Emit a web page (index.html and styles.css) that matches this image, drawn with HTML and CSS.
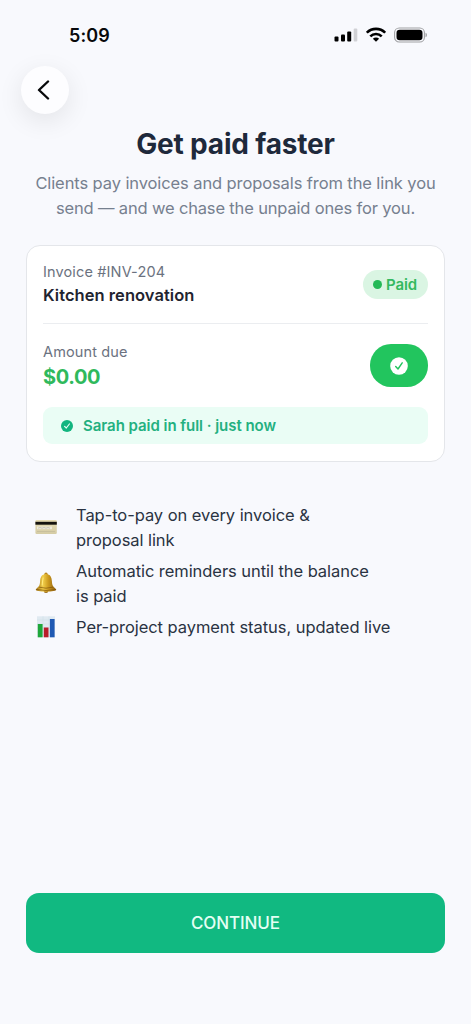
FILE: index.html
```html
<!DOCTYPE html>
<html lang="en">
<head>
<meta charset="utf-8">
<meta name="viewport" content="width=device-width">
<title>Get paid faster</title>
<link rel="stylesheet" href="styles.css">
</head>
<body>
<div class="screen">
  <header class="status-bar">
    <span class="time">5:09</span>
    <div class="status-icons">
      <svg width="24" height="16" viewBox="0 0 24 16">
        <rect x="0.5" y="9.5" width="4" height="5" rx="1"/>
        <rect x="7" y="7.5" width="4" height="7" rx="1"/>
        <rect x="13.2" y="4.5" width="4" height="10" rx="1"/>
        <rect x="19.7" y="1.5" width="3.6" height="13" rx="1" fill="#d0d1d5"/>
      </svg>
      <svg width="20" height="16" viewBox="0 0 20 16" fill="none" stroke="#000" stroke-width="2.6">
        <path d="M0.8 5.7A13 13 0 0 1 19.2 5.7"/>
        <path d="M4.3 9.3A8.1 8.1 0 0 1 15.7 9.3"/>
        <path d="M10 14.8L6.9 11.8A4.4 4.4 0 0 1 13.1 11.8Z" fill="#000" stroke="none"/>
      </svg>
      <svg width="34" height="16" viewBox="0 0 34 16">
        <rect x="0.6" y="1" width="29.8" height="14" rx="4.6" fill="none" stroke="#a0a1a4" stroke-width="1.1"/>
        <rect x="2.5" y="2.8" width="26" height="10.4" rx="3.2"/>
        <path d="M31.5 5.8Q33 6.3 33 8T31.5 10.2Z" fill="#a0a1a4"/>
      </svg>
    </div>
  </header>

  <button class="back" aria-label="Back">
    <svg width="14" height="20" viewBox="0 0 14 20" fill="none" stroke="#08090b" stroke-width="2.4" stroke-linecap="round" stroke-linejoin="round"><path d="M11 1.5L2 10L11 18.5"/></svg>
  </button>

  <h1 class="title">Get paid faster</h1>
  <p class="subtitle">Clients pay invoices and proposals from the link you<br><span class="second-line">send — and we chase the unpaid ones for you.</span></p>

  <section class="card">
    <div class="row invoice">
      <div>
        <div class="label">Invoice #INV-204</div>
        <div class="project">Kitchen renovation</div>
      </div>
      <div class="badge"><span class="dot"></span>Paid</div>
    </div>
    <div class="row amount-row">
      <div>
        <div class="label">Amount due</div>
        <div class="amount">$0.00</div>
      </div>
      <div class="check-pill">
        <svg width="18" height="18" viewBox="0 0 18 18"><circle cx="9" cy="9" r="8.8" fill="#fff"/><path d="M5.7 9.5L8 12L12.2 5.8" fill="none" stroke="#22c55e" stroke-width="1.4" stroke-linecap="round" stroke-linejoin="round"/></svg>
      </div>
    </div>
    <div class="notice">
      <svg width="12" height="12" viewBox="0 0 12 12"><circle cx="6" cy="6" r="6" fill="#12b57f"/><path d="M3.6 6.3L5.3 8L8.4 4" fill="none" stroke="#e9fdf4" stroke-width="1.2" stroke-linecap="round" stroke-linejoin="round"/></svg>
      <span>Sarah paid in full · just now</span>
    </div>
  </section>

  <ul class="features">
    <li>
      <svg class="emoji" width="22" height="22" viewBox="0 0 22 22">
        <defs><linearGradient id="card" x1="0" y1="0" x2="0" y2="1"><stop offset="0" stop-color="#e6dcb4"/><stop offset="1" stop-color="#d5cca5"/></linearGradient></defs>
        <rect x="0.4" y="4" width="21.4" height="14" rx="1.2" fill="url(#card)"/>
        <path d="M0.4 5.8H21.8V8.7H0.4Z" fill="#15130f"/>
        <path d="M2 10.5H17V13.2H2Z" fill="#eeeadb"/>
        <path d="M3 12.2L5 11.5L7 12.2L9 11.5L11 12.2L13 11.5L15 12.2" fill="none" stroke="#b3af9f" stroke-width="0.6"/>
        <path d="M2 15.5H20" stroke="#c4bc9b" stroke-width="0.8"/>
      </svg>
      <span>Tap-to-pay on every invoice &amp;<br>proposal link</span>
    </li>
    <li>
      <svg class="emoji" width="22" height="22" viewBox="0 0 22 22">
        <defs><linearGradient id="bell"><stop offset="0" stop-color="#9d6d10"/><stop offset=".35" stop-color="#f2cf4b"/><stop offset=".6" stop-color="#cf9d20"/><stop offset="1" stop-color="#8c5b0b"/></linearGradient></defs>
        <circle cx="11" cy="18.8" r="2.3" fill="#946414"/>
        <circle cx="11" cy="2.3" r="1.7" fill="#b98720"/>
        <path d="M11 2C6.5 2 5.3 5.7 5.1 9.2C4.9 13 4.2 14.4 0.8 17.2Q0.5 18.5 2.2 18.8Q11 20.6 19.8 18.8Q21.5 18.5 21.2 17.2C17.8 14.4 17.1 13 16.9 9.2C16.7 5.7 15.5 2 11 2Z" fill="url(#bell)"/>
        <path d="M4.1 15.2Q11 17.2 17.9 15.2M1.2 17.5Q11 19.5 20.8 17.5" fill="none" stroke="#80530b" stroke-width="0.7"/>
        <path d="M8.2 5.5Q7.4 9 7.2 13.5" stroke="#ffe97d" stroke-width="1.1" fill="none"/>
      </svg>
      <span>Automatic reminders until the balance<br>is paid</span>
    </li>
    <li>
      <svg class="emoji" width="22" height="22" viewBox="0 0 22 22">
        <rect x="2" y="0.3" width="18" height="21" fill="#e0eaf1"/>
        <path d="M2 4H20M2 8H20M2 12H20M2 16H20M8 0.3V21M14 0.3V21" stroke="#cddce6" stroke-width="0.5"/>
        <rect x="2.8" y="8" width="4.8" height="13.3" fill="#1ea73b"/>
        <rect x="8.8" y="11.5" width="4.7" height="9.8" fill="#b81d2a"/>
        <rect x="14.9" y="3" width="4.7" height="18.3" fill="#2059b3"/>
      </svg>
      <span>Per-project payment status, updated live</span>
    </li>
  </ul>

  <button class="continue">CONTINUE</button>
</div>
</body>
</html>
```
FILE: styles.css
```css
* { box-sizing: border-box; }
body { margin: 0; background: #f8f9fd; font-family: Inter, "Liberation Sans", sans-serif; color: #1e293b; }
button { border: 0; padding: 0; font-family: inherit; }
.screen { display: flex; flex-direction: column; height: 1024px; padding: 0 26px 71px; white-space: nowrap; }
.status-bar { display: flex; justify-content: space-between; align-items: center; height: 66px; padding: 4px 17px 0 43px; }
.time { padding-top: 1px; font-size: 18px; line-height: 22px; font-weight: 600; color: #08090b; letter-spacing: 0.1px; }
.status-icons { display: flex; align-items: center; gap: 8px; }
.status-icons svg { display: block; }
.back { display: flex; align-items: center; justify-content: center; width: 48px; height: 48px; margin-left: -5px; padding-right: 3px; border-radius: 50%; background: #fdfdff; box-shadow: 0 7px 26px rgba(0, 0, 0, 0.09); }
.title { margin: 11px 0 0; text-align: center; font-size: 28px; line-height: 38px; font-weight: 700; letter-spacing: -0.17px; }
.subtitle { margin: 8px -10px 0; text-align: center; font-size: 16.5px; line-height: 25px; color: #76808f; letter-spacing: -0.1px; }
.second-line { letter-spacing: -0.16px; }
.card { height: 217px; margin-top: 24px; padding: 0 16px; border: 1px solid #e4e6ea; border-radius: 14px; background: #fff; }
.row { display: flex; align-items: center; justify-content: space-between; }
.invoice { height: 78px; border-bottom: 1px solid #ebedf0; }
.label { font-size: 14.5px; line-height: 22px; color: #6b7280; letter-spacing: 0.14px; }
.project { font-size: 16.5px; line-height: 25px; font-weight: 600; letter-spacing: 0.05px; color: #1f2430; }
.badge { display: flex; align-items: center; gap: 4px; height: 29px; padding: 0 11px 0 10px; border-radius: 15px; background: #daf5e3; color: #34b960; font-size: 15px; font-weight: 600; letter-spacing: -0.1px; }
.dot { width: 9px; height: 9px; border-radius: 50%; background: #25b957; }
.amount-row { height: 83px; }
.amount { font-size: 20px; line-height: 28px; font-weight: 700; color: #2fb95c; letter-spacing: -0.4px; }
.check-pill { display: flex; align-items: center; justify-content: center; width: 58px; height: 43px; border-radius: 21px; background: #22c55e; }
.notice { display: flex; align-items: center; gap: 10px; height: 37px; padding-left: 18px; border-radius: 9px; background: #eafdf5; color: #23b080; font-size: 15px; font-weight: 600; letter-spacing: -0.04px; }
.features { display: flex; flex-direction: column; gap: 7px; list-style: none; margin: 41px 0 0; padding: 0 0 0 9px; font-size: 16.5px; line-height: 24.5px; letter-spacing: -0.06px; color: #2a3342; }
.features li { display: flex; align-items: center; gap: 19px; }
.emoji { flex: none; margin-bottom: 1px; }
.continue { height: 60px; margin-top: auto; border-radius: 13px; background: #11b981; color: #e4fff4; font-size: 17px; font-weight: 500; letter-spacing: -0.1px; }
```
